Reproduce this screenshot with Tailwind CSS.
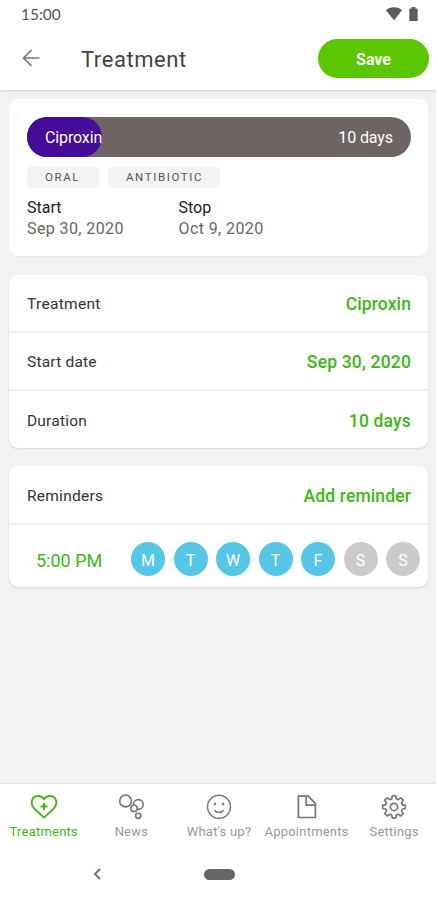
<!DOCTYPE html>
<html lang="en">
<head>
<meta charset="utf-8">
<title>Treatment</title>
<script src="https://cdn.jsdelivr.net/npm/@tailwindcss/browser@4"></script>
</head>
<body class="bg-white">
<div class="flex h-[900px] w-[436px] flex-col overflow-hidden bg-[#f2f2f2] font-[Roboto,sans-serif] text-[#333]">
  <header class="z-10 h-[90px] shrink-0 bg-white shadow-[0_1px_2px_rgba(0,0,0,0.15)]">
    <div class="flex h-7 items-center justify-between pr-[18px] pl-[21px]">
      <span class="font-[Lato,sans-serif] text-[15.500px] leading-7 text-[#555]">15:00</span>
      <div class="flex items-center gap-[7px] text-[#5c5c5c]">
        <svg class="h-[14px] w-4" viewBox="0 0 16 14" fill="currentColor"><path d="M0 3.2C4.500-.6 11.500-.6 16 3.200L8 13.300Z"/></svg>
        <svg class="h-[14px] w-[9px]" viewBox="0 0 9 15" fill="currentColor"><path d="M2.500 0h4v1.500H8a1 1 0 0 1 1 1V14a1 1 0 0 1-1 1H1a1 1 0 0 1-1-1V2.500a1 1 0 0 1 1-1h1.500Z"/></svg>
      </div>
    </div>
    <div class="flex h-[62px] items-center pr-[7px] pb-[2px] pl-[22px]">
      <svg class="h-[18px] w-[18px]" viewBox="0 0 18 18" fill="none" stroke="#777" stroke-width="1.700"><path d="M17.500 9H1.500M9.500 1 1.500 9l8 8"/></svg>
      <h1 class="ml-[41px] pt-[3px] text-[22px] leading-7 tracking-[0.550px] text-[#444]">Treatment</h1>
      <button class="ml-auto h-[39px] w-[111px] rounded-full bg-[#5bc500] pt-[3px] text-[16px] font-bold text-white">Save</button>
    </div>
  </header>

  <main class="flex flex-1 flex-col px-[9px] pr-2 pt-[9px]">
    <section class="h-[157px] rounded-[9px] bg-white px-[18px] pt-[18px] shadow-[0_1px_1px_rgba(0,0,0,0.05)]">
      <div class="flex h-10 w-[384px] items-center justify-between rounded-full bg-[#6e6464] pr-[18px] text-[16px] text-white">
        <div class="flex h-10 w-[75px] items-center rounded-full bg-[#440c98] pt-[2px] pl-[18px]"><span class="tracking-[-0.130px]">Ciproxin</span></div>
        <span class="pt-[2px] tracking-[-0.100px]">10 days</span>
      </div>
      <div class="mt-[9px] flex gap-[9px] text-[11.500px] leading-[22px] tracking-[1.600px] text-[#555]">
        <span class="w-[72px] rounded-[5px] bg-[#f3f3f3] pl-[18px]">ORAL</span>
        <span class="w-[112px] rounded-[5px] bg-[#f3f3f3] pl-[18px]">ANTIBIOTIC</span>
      </div>
      <dl class="mt-[9px] grid grid-cols-[151.500px_1fr] text-[16px] leading-[21px]">
        <div><dt class="text-[#222]">Start</dt><dd class="tracking-[0.400px] text-[#666]">Sep 30, 2020</dd></div>
        <div><dt class="text-[#222]">Stop</dt><dd class="tracking-[0.400px] text-[#666]">Oct 9, 2020</dd></div>
      </dl>
    </section>

    <section class="mt-[19px] h-[173px] divide-y-2 divide-[#efefef] rounded-[9px] bg-white shadow-[0_1px_2px_rgba(0,0,0,0.12)]">
      <div class="flex h-[58px] items-center justify-between pr-[17px] pl-[18px]"><span class="pt-[4px] text-[15.500px] tracking-[0.300px]">Treatment</span><span class="pt-[2px] text-[17.500px] font-medium tracking-[0.100px] text-[#3db814]">Ciproxin</span></div>
      <div class="flex h-[58px] items-center justify-between pr-[17px] pl-[18px]"><span class="pt-[4px] text-[15.500px] tracking-[0.200px]">Start date</span><span class="pt-[3px] text-[17.500px] font-medium tracking-[0.170px] text-[#3db814]">Sep 30, 2020</span></div>
      <div class="flex h-[57px] items-center justify-between pr-[17px] pl-[18px]"><span class="pt-[4px] text-[15.500px] tracking-[0.200px]">Duration</span><span class="pt-[3px] text-[17.500px] font-medium tracking-[0.170px] text-[#3db814]">10 days</span></div>
    </section>

    <section class="mt-[18px] h-[121px] divide-y-2 divide-[#efefef] rounded-[9px] bg-white shadow-[0_1px_2px_rgba(0,0,0,0.12)]">
      <div class="flex h-[59px] items-center justify-between pr-[17px] pl-[18px]"><span class="pt-[4px] text-[15.500px] tracking-[0.250px]">Reminders</span><span class="pt-[3px] text-[17.500px] font-medium tracking-[0.120px] text-[#3db814]">Add reminder</span></div>
      <div class="flex h-[62px] items-center justify-between pt-[5px] pr-2 pl-[27px]">
        <span class="pt-[4px] text-[18px] text-[#3db814]">5:00 PM</span>
        <div class="flex gap-[8.500px] text-center text-[16px] leading-[37px] text-white">
          <span class="size-[34px] rounded-full bg-[#55c6e6]">M</span>
          <span class="size-[34px] rounded-full bg-[#55c6e6]">T</span>
          <span class="size-[34px] rounded-full bg-[#55c6e6]">W</span>
          <span class="size-[34px] rounded-full bg-[#55c6e6]">T</span>
          <span class="size-[34px] rounded-full bg-[#55c6e6]">F</span>
          <span class="size-[34px] rounded-full bg-[#cbcbcb]">S</span>
          <span class="size-[34px] rounded-full bg-[#cbcbcb]">S</span>
        </div>
      </div>
    </section>
  </main>

  <footer class="h-[116px] shrink-0 bg-white shadow-[0_-1px_1px_rgba(0,0,0,0.06)]">
    <nav class="grid h-[60px] w-[438px] grid-cols-5 pt-[8px] text-[13px] leading-4 tracking-[0.220px] whitespace-nowrap text-[#999]">
      <a class="flex flex-col items-center gap-[4px] text-[#3db814]">
        <svg class="h-7 w-7" viewBox="0 0 28 28" fill="none" stroke="currentColor" stroke-width="1.800" stroke-linejoin="round"><path d="M14 25.600 3.800 16C-.2 11 1.900 4.300 7.800 4c2.700-.1 4.900 1 6.200 3.200C15.300 5 17.500 3.900 20.200 4c5.900.3 8 7 4 12Z"/><path d="M14 11v7M10.500 14.500h7" stroke-width="2"/></svg>
        <span>Treatments</span></a>
      <a class="flex flex-col items-center gap-[4px]">
        <svg class="h-7 w-7" viewBox="0 0 28 28" fill="none" stroke="#777" stroke-width="1.600"><circle cx="8.600" cy="9" r="5.900"/><circle cx="21.300" cy="12.500" r="4.900"/><circle cx="17" cy="16.500" r="3.200" fill="white"/><circle cx="21.200" cy="23.800" r="2.600"/></svg>
        <span>News</span></a>
      <a class="flex flex-col items-center gap-[4px]">
        <svg class="h-7 w-7" viewBox="0 0 28 28" fill="none" stroke="#777" stroke-width="1.500"><circle cx="14" cy="14.800" r="11.500"/><path d="M9.500 18.200c2.200 3 6.800 3 9 0"/><circle cx="10" cy="12" r="1.300" fill="#777" stroke="none"/><circle cx="18" cy="12" r="1.300" fill="#777" stroke="none"/></svg>
        <span>What's up?</span></a>
      <a class="flex flex-col items-center gap-[4px]">
        <svg class="h-7 w-7" viewBox="0 0 28 28" fill="none" stroke="#777" stroke-width="1.700"><path d="M5.400 4.200h10l7 7.500v13.800h-17ZM13.200 4.200v9h9.200"/></svg>
        <span>Appointments</span></a>
      <a class="flex flex-col items-center gap-[4px]">
        <svg class="h-7 w-7" viewBox="0 0 30 30" fill="none" stroke="#777" stroke-width="1.800" stroke-linejoin="round"><path d="M13.200 4h3.600l.6 3.300 2.200.9 2.800-1.900 2.500 2.500-1.900 2.800.9 2.200 3.300.6v3.200l-3.300.6-.9 2.200 1.900 2.800-2.500 2.500-2.800-1.900-2.200.9-.6 3.300h-3.600l-.6-3.300-2.200-.9-2.800 1.900-2.500-2.500L7 20.400l-.9-2.200-3.300-.6v-3.200l3.300-.6.9-2.200-1.900-2.800 2.500-2.500 2.800 1.900 2.200-.9Z"/><circle cx="15" cy="16" r="3.900"/></svg>
        <span>Settings</span></a>
    </nav>
    <div class="flex h-[60px] items-center pl-[93px]">
      <svg class="h-3 w-2" viewBox="0 0 8 12" fill="none" stroke="#777" stroke-width="2"><path d="M7 1 2 6l5 5"/></svg>
      <div class="ml-[103px] h-[11px] w-[31px] rounded-full bg-[#666]"></div>
    </div>
  </footer>
</div>
</body>
</html>
